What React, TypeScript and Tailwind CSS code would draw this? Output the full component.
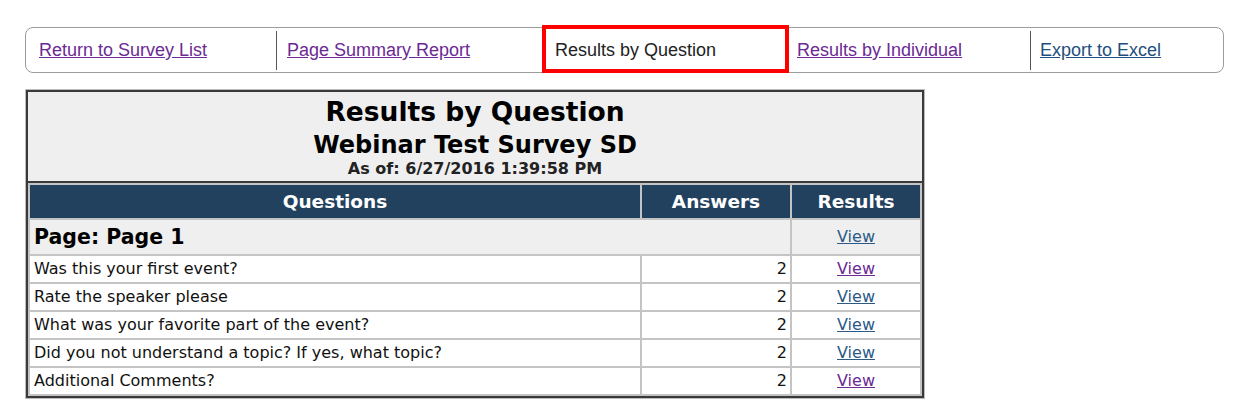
import React from 'react'

type Row = { q: string; answers: number; visited: boolean }

const rows: Row[] = [
  { q: 'Was this your first event?', answers: 2, visited: true },
  { q: 'Rate the speaker please', answers: 2, visited: false },
  { q: 'What was your favorite part of the event?', answers: 2, visited: false },
  { q: 'Did you not understand a topic? If yes, what topic?', answers: 2, visited: false },
  { q: 'Additional Comments?', answers: 2, visited: true },
]

const visitedLink = 'text-[#6b2a94] underline'
const freshLink = 'text-[#2c5a87] underline'

function NavBar() {
  return (
    <div className="ml-[25px] flex h-[46px] w-[1199px] items-center rounded-[8px] border border-[#9c9c9c] pt-[1px] font-['Liberation_Sans',Arial,sans-serif] text-[18px]">
      <div className="w-[250px] pl-[13px]">
        <a href="#" className={visitedLink}>Return to Survey List</a>
      </div>
      <div className="flex h-[39px] w-[266px] items-center border-l border-[#555] pl-[10px]">
        <a href="#" className={visitedLink}>Page Summary Report</a>
      </div>
      <div className="relative flex h-full w-[247px] items-center pl-[13px] text-[#222]">
        <span className="absolute -top-[4px] -bottom-[1px] left-0 right-0 border-4 border-[#ff0000]" />
        Results by Question
      </div>
      <div className="w-[241px] pl-[8px]">
        <a href="#" className={visitedLink}>Results by Individual</a>
      </div>
      <div className="flex h-[39px] flex-1 items-center border-l border-[#555] pl-[9px]">
        <a href="#" className="text-[#1f4f7c] underline">Export to Excel</a>
      </div>
    </div>
  )
}

export default function App() {
  return (
    <div className="h-[409px] overflow-hidden bg-white pt-[27px]">
      <NavBar />

      <div className="ml-[25px] mt-[16px] w-[900px] border border-[#bcbcbc] font-['DejaVu_Sans',Verdana,sans-serif]">
        <div className="border-2 border-[#3a3a3a]">
          {/* titulo */}
          <div className="h-[89px] bg-[#efefef] pt-[4px] text-center font-bold text-black">
            <div className="text-[26.5px] leading-[32px]">Results by Question</div>
            <div className="mt-[3px] text-[24px] leading-[28px]">Webinar Test Survey SD</div>
            <div className="mt-[1px] text-[16px] leading-[18px] text-[#222]">As of: 6/27/2016 1:39:58 PM</div>
          </div>

          <table className="w-full border-separate border-spacing-[2px] border-t-2 border-[#3a3a3a] bg-[#c4c4c4]">
            <thead>
              <tr className="h-[33px] bg-[#22415f] text-[18.5px] font-bold text-white">
                <th className="w-[610px] pt-[1px]">Questions</th>
                <th className="w-[148px] pt-[1px]">Answers</th>
                <th className="w-[128px] pt-[1px]">Results</th>
              </tr>
            </thead>
            <tbody className="text-[16px] text-[#111]">
              <tr className="h-[34px] bg-[#efefef]">
                <td colSpan={2} className="pl-[4px] text-[20.5px] font-bold text-black">Page: Page 1</td>
                <td className="text-center"><a href="#" className={freshLink}>View</a></td>
              </tr>
              {rows.map(r => (
                <tr key={r.q} className="h-[26px] bg-white">
                  <td className="pl-[4px] leading-[20px]">{r.q}</td>
                  <td className="pr-[3px] text-right leading-[20px]">{r.answers}</td>
                  <td className="text-center leading-[20px]">
                    <a href="#" className={r.visited ? visitedLink : freshLink}>View</a>
                  </td>
                </tr>
              ))}
            </tbody>
          </table>
        </div>
      </div>
    </div>
  )
}
